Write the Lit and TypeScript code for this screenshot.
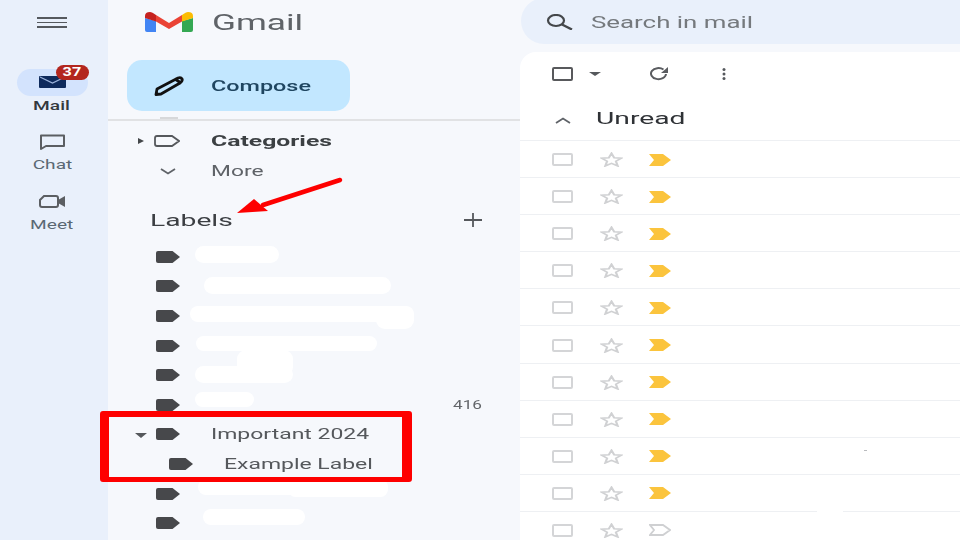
import { LitElement, css, html, svg } from "lit";
import { customElement } from "lit/decorators.js";

const labelIcon = svg`<svg class="tag" width="24" height="12" viewBox="0 0 24 12"><path d="M2 0H16.500L24 6L16.500 12H2Q0 12 0 10V2Q0 0 2 0Z" fill="#47484b"/></svg>`;

// blobs are the white scribbles hiding label names: [left, top, width, height]
const labels = [
  { blobs: [[87, 4, 84, 17]] },
  { blobs: [[96, 5, 187, 17]] },
  { blobs: [[82, 5, 224, 16], [268, 7, 38, 21]] },
  { blobs: [[88, 5, 181, 15]] },
  { blobs: [[87, 6, 98, 17], [129, -10, 56, 26]] },
  { blobs: [[87, 2, 59, 15]], count: "416" },
  { name: "Important 2024", open: true },
  { name: "Example Label", child: true },
  { blobs: [[90, 0, 190, 16], [180, 3, 100, 15]] },
  { blobs: [[95, 1, 102, 16]] },
] as Array<{
  name?: string;
  open?: boolean;
  child?: boolean;
  count?: string;
  blobs?: number[][];
}>;

const starPath =
  "M11.500 2L14.200 8.600L21.500 9.100L15.900 13.600L17.700 20.500L11.500 16.700L5.300 20.500L7.100 13.600L1.500 9.100L8.800 8.600Z";

@customElement("app-root")
export class AppRoot extends LitElement {
  static styles = css`
    :host {
      display: block;
      width: 960px;
      height: 540px;
      overflow: hidden;
      background: #f6f8fc;
      font-family: Roboto, "Liberation Sans", sans-serif;
    }

    .page {
      position: relative;
      display: grid;
      grid-template-columns: 108px 412px 440px;
      height: 540px;
      overflow: hidden;
      filter: blur(0.45px);
    }

    /* the source picture is stretched sideways, so the text is too */
    .st {
      display: inline-block;
      transform-origin: left center;
      transform: scaleX(var(--sx, 1.5));
      white-space: nowrap;
    }

    /* left rail */
    .rail {
      display: flex;
      flex-direction: column;
      align-items: center;
      background: #e9f0fb;
      width: 108px;
      padding-right: 4px;
      box-sizing: border-box;
    }
    .burger {
      display: flex;
      flex-direction: column;
      gap: 3px;
      width: 30px;
      margin: 17px 0 41px;
    }
    .burger i {
      display: block;
      height: 1.6px;
      background: #55595e;
    }
    .rail-item {
      display: flex;
      flex-direction: column;
      align-items: center;
      height: 59.5px;
      font-size: 13px;
      color: #5a6873;
      --sx: 1.47;
    }
    .rail-item .st {
      transform-origin: center;
      line-height: 18px;
    }
    .rail-item .pill {
      position: relative;
      display: flex;
      align-items: center;
      justify-content: center;
      width: 71px;
      height: 27px;
      border-radius: 14px;
      margin-bottom: 1px;
    }
    .rail-item.on .pill {
      background: #d3e3fd;
    }
    .rail-item.on {
      color: #33383d;
      font-weight: 500;
    }
    .badge {
      position: absolute;
      left: 39px;
      top: -4px;
      width: 33px;
      height: 15px;
      border-radius: 8px;
      background: #b3261e;
      color: #fff;
      font-size: 12px;
      font-weight: 700;
      line-height: 15px;
      text-align: center;
    }
    .badge .st {
      line-height: 15px;
      --sx: 1.35;
    }

    /* sidebar */
    .side {
      display: flex;
      flex-direction: column;
    }
    .brand {
      display: flex;
      align-items: center;
      gap: 19px;
      height: 44px;
      padding-left: 37px;
      font-size: 22px;
      color: #5f6368;
      --sx: 1.6;
    }
    .compose {
      display: flex;
      align-items: center;
      gap: 26px;
      width: 223px;
      height: 51px;
      margin: 16px 0 6px 19px;
      padding-left: 27px;
      box-sizing: border-box;
      border-radius: 15px;
      background: #c2e7ff;
      color: #1f4560;
      font-size: 15px;
      font-weight: 500;
      --sx: 1.56;
    }
    .stub {
      width: 18px;
      height: 2px;
      margin-left: 52px;
      background: #d7d8da;
    }
    .divider {
      height: 2px;
      margin-bottom: 5px;
      background: #e1e2e4;
    }
    .nav-row {
      display: flex;
      align-items: center;
      height: 30px;
      font-size: 15px;
      color: #5f6368;
      --sx: 1.52;
    }
    .nav-row .lead {
      display: flex;
      align-items: center;
      justify-content: flex-end;
      width: 72px;
      margin-right: 31px;
    }
    .nav-row.bold {
      color: #3c4043;
      font-weight: 700;
      --sx: 1.65;
    }
    .labels-head {
      display: flex;
      align-items: center;
      justify-content: space-between;
      height: 30px;
      margin-top: 19px;
      padding: 0 38px 0 42px;
      font-size: 17px;
      color: #3c3f43;
      --sx: 1.66;
    }
    .labels {
      margin-top: 7px;
    }
    .label {
      position: relative;
      display: flex;
      align-items: center;
      height: 29.6px;
      padding-left: 48px;
      font-size: 15px;
      color: #55585c;
      --sx: 1.53;
    }
    .label.child {
      padding-left: 61px;
    }
    .label .name {
      margin-left: 31px;
    }
    .label .caret {
      position: absolute;
      left: 27px;
      top: 13px;
    }
    .label .count {
      position: absolute;
      left: 345px;
      font-size: 12px;
      color: #63666a;
      --sx: 1.43;
    }
    .blob {
      position: absolute;
      background: #fff;
      border-radius: 9px;
    }

    /* mail column */
    .mail {
      display: flex;
      flex-direction: column;
    }
    .search {
      display: flex;
      align-items: center;
      gap: 18px;
      height: 46px;
      margin: -2px 0 0 1px;
      padding: 2px 0 0 24px;
      box-sizing: border-box;
      border-radius: 24px 0 0 24px;
      background: #e9f0fb;
      font-size: 17px;
      color: #75797d;
      --sx: 1.52;
    }
    .card {
      position: relative;
      flex: 1;
      margin-top: 8px;
      background: #fff;
      border-radius: 16px 0 0 0;
      overflow: hidden;
    }
    .tools {
      display: flex;
      align-items: center;
      height: 44px;
      padding-left: 32px;
    }
    .box {
      box-sizing: border-box;
      width: 21px;
      height: 13px;
      border: 2px solid #d4d5d7;
      border-radius: 2px;
    }
    .tools .box {
      height: 14px;
      border-color: #58595c;
    }
    .unread {
      display: flex;
      align-items: center;
      gap: 25px;
      height: 45px;
      padding-left: 35px;
      box-sizing: border-box;
      border-bottom: 1px solid #eef0f3;
      font-size: 17px;
      color: #2f3236;
      --sx: 1.66;
    }
    .row {
      display: flex;
      align-items: center;
      height: 37.1px;
      padding: 1px 0 0 32px;
      box-sizing: border-box;
      border-bottom: 1px solid #eef0f3;
    }
    .row .star {
      margin: 0 26px 0 27px;
    }
    .patch {
      position: absolute;
      left: 297px;
      top: 458px;
      width: 26px;
      height: 4px;
      background: #fff;
    }
    .dash {
      position: absolute;
      left: 344px;
      top: 398px;
      width: 3px;
      height: 1px;
      background: #b9bbbe;
    }

    /* annotations drawn over the screenshot */
    .highlight {
      position: absolute;
      left: 100px;
      top: 411px;
      width: 312px;
      height: 71px;
      box-sizing: border-box;
      border-style: solid;
      border-color: #fe0000;
      border-width: 6px 10px 5px 9px;
      border-radius: 3px;
    }
    .arrow {
      position: absolute;
      left: 230px;
      top: 170px;
    }
  `;

  renderLabel(l: (typeof labels)[number]) {
    return html`<div class="label ${l.child ? "child" : ""}">
      ${l.open
        ? html`<svg class="caret" width="12" height="5" viewBox="0 0 12 5"><path d="M0 0H12L6 5Z" fill="#55585c"/></svg>`
        : ""}
      ${labelIcon}
      ${l.name ? html`<span class="name st">${l.name}</span>` : ""}
      ${l.count ? html`<span class="count st">${l.count}</span>` : ""}
      ${(l.blobs ?? []).map(
        (b) => html`<div
          class="blob"
          style="left:${b[0]}px;top:${b[1]}px;width:${b[2]}px;height:${b[3]}px"
        ></div>`
      )}
    </div>`;
  }

  renderRow(unlabeled: boolean) {
    return html`<div class="row">
      <div class="box"></div>
      <svg class="star" width="23" height="15" viewBox="0 0 23 22" preserveAspectRatio="none"><path d="${starPath}" fill="none" stroke="#d0d1d3" stroke-width="2.200"/></svg>
      ${unlabeled
        ? html`<svg width="22" height="12" viewBox="0 0 22 12"><path d="M1 1H14L21 6L14 11H1L5 6Z" fill="none" stroke="#cfd0d2" stroke-width="1.800"/></svg>`
        : html`<svg width="22" height="12" viewBox="0 0 22 12"><path d="M0 0H14L22 6L14 12H0L5 6Z" fill="#fbc43d"/></svg>`}
    </div>`;
  }

  render() {
    return html`<div class="page">
      <nav class="rail">
        <div class="burger"><i></i><i></i><i></i></div>
        <div class="rail-item on">
          <div class="pill">
            <svg width="27" height="12" viewBox="0 0 27 12"><rect width="27" height="12" rx="1" fill="#0e2a5c"/><path d="M1 1L13.500 7L26 1" fill="none" stroke="#9db4dc" stroke-width="1.200"/></svg>
            <div class="badge"><span class="st">37</span></div>
          </div>
          <span class="st">Mail</span>
        </div>
        <div class="rail-item">
          <div class="pill">
            <svg width="27" height="16" viewBox="0 0 27 16"><path d="M2 1.500H25V12H7L2 15Z" fill="none" stroke="#5b5e62" stroke-width="2" stroke-linejoin="round"/></svg>
          </div>
          <span class="st">Chat</span>
        </div>
        <div class="rail-item">
          <div class="pill">
            <svg width="27" height="15" viewBox="0 0 27 15"><path d="M5 2H17Q19 2 19 4V11Q19 13 17 13H3Q1 13 1 11V6Z" fill="none" stroke="#5b5e62" stroke-width="2"/><path d="M19 6L26 2V13L19 9Z" fill="#5b5e62"/></svg>
          </div>
          <span class="st">Meet</span>
        </div>
      </nav>

      <aside class="side">
        <div class="brand">
          <svg width="48" height="20" viewBox="0 0 48 20">
            <path d="M0 6V18Q0 20 2 20H11V9Z" fill="#4285f4"/>
            <path d="M37 9V20H46Q48 20 48 18V6Z" fill="#34a853"/>
            <path d="M11 3L24 11L37 3V9.500L24 17L11 9.500Z" fill="#ea4335"/>
            <path d="M0 6V4Q0 0 5 0Q7 0 11 3V9.500Z" fill="#c5221f"/>
            <path d="M37 3Q41 0 43 0Q48 0 48 4V6L37 9.500Z" fill="#fbbc04"/>
          </svg>
          <span class="st">Gmail</span>
        </div>
        <div class="compose">
          <svg width="31" height="20" viewBox="0 0 31 20"><path d="M3 13L24 2Q27 1 28 3Q29 5 26 7L7 18L2 18.500Z" fill="none" stroke="#111" stroke-width="2.800" stroke-linejoin="round"/><path d="M21 3L27 7" stroke="#111" stroke-width="3"/></svg>
          <span class="st">Compose</span>
        </div>
        <div class="stub"></div>
        <div class="divider"></div>
        <div class="nav-row bold">
          <div class="lead">
            <svg width="42" height="12" viewBox="0 0 42 12"><path d="M0 3L6 6L0 9Z" fill="#44474a"/><path d="M19 1H34L41 6L34 11H19Q17 11 17 9V3Q17 1 19 1Z" fill="none" stroke="#55585c" stroke-width="1.800"/></svg>
          </div>
          <span class="st">Categories</span>
        </div>
        <div class="nav-row">
          <div class="lead">
            <svg width="16" height="7" viewBox="0 0 16 7" style="margin-right:4px"><path d="M1 1L8 5.500L15 1" fill="none" stroke="#5f6368" stroke-width="1.800"/></svg>
          </div>
          <span class="st">More</span>
        </div>
        <div class="labels-head">
          <span class="st">Labels</span>
          <svg width="18" height="14" viewBox="0 0 18 14"><path d="M9 0V14M0 7H18" stroke="#55585c" stroke-width="1.800"/></svg>
        </div>
        <div class="labels">${labels.map((l) => this.renderLabel(l))}</div>
      </aside>

      <main class="mail">
        <div class="search">
          <svg width="28" height="16" viewBox="0 0 28 16"><ellipse cx="11" cy="6.500" rx="8" ry="5.500" fill="none" stroke="#44474a" stroke-width="2.200"/><path d="M17 10.500L27 15.500" stroke="#44474a" stroke-width="2.400"/></svg>
          <span class="st">Search in mail</span>
        </div>
        <section class="card">
          <div class="tools">
            <div class="box"></div>
            <svg width="12" height="4" viewBox="0 0 12 4" style="margin-left:16px"><path d="M0 0H12L6 4Z" fill="#55585c"/></svg>
            <svg width="22" height="14" viewBox="0 0 22 14" style="margin-left:47px"><path d="M18 7A7.500 5.500 0 1 1 15.500 2.500" fill="none" stroke="#5a5c60" stroke-width="2"/><path d="M20 0V6H13Z" fill="#5a5c60"/></svg>
            <svg width="6" height="12" viewBox="0 0 6 12" style="margin-left:51px"><circle cx="3" cy="1.500" r="1.500" fill="#55585c"/><circle cx="3" cy="6" r="1.500" fill="#55585c"/><circle cx="3" cy="10.500" r="1.500" fill="#55585c"/></svg>
          </div>
          <div class="unread">
            <svg width="16" height="7" viewBox="0 0 16 7" style="margin-top:5px"><path d="M1 6L8 1.500L15 6" fill="none" stroke="#5f6368" stroke-width="1.800"/></svg>
            <span class="st">Unread</span>
          </div>
          ${Array.from({ length: 11 }, (_, i) => this.renderRow(i === 10))}
          <div class="dash"></div>
          <div class="patch"></div>
        </section>
      </main>

      <div class="highlight"></div>
      <svg class="arrow" width="116" height="50" viewBox="0 0 116 50">
        <path d="M110 10L33 35" stroke="#fe0000" stroke-width="4.500" stroke-linecap="round"/>
        <path d="M7 43L24 29L38 41Z" fill="#fe0000"/>
      </svg>
    </div>`;
  }
}
